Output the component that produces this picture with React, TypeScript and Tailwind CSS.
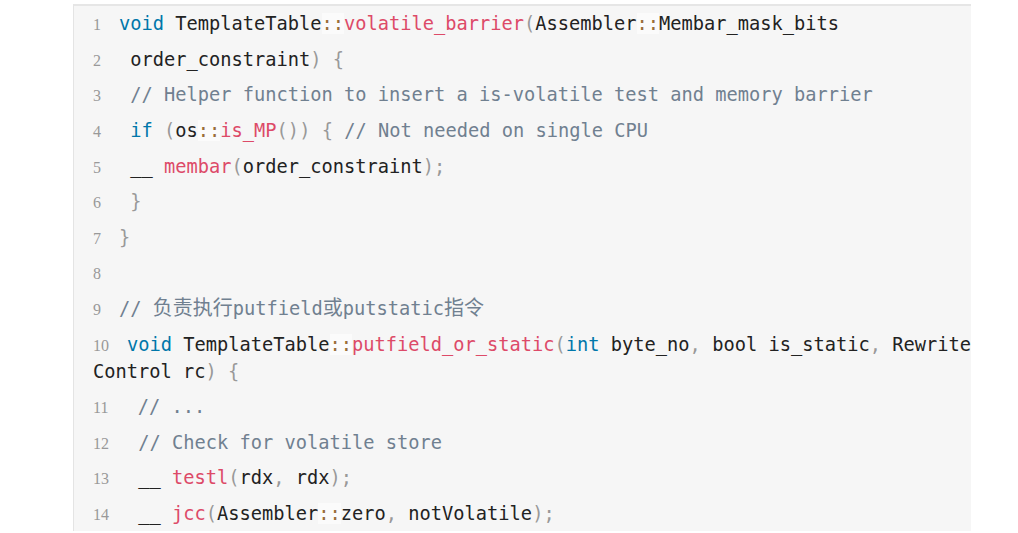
import React from 'react';

type Tok = [string, string];

const tone: Record<string, string> = {
  kw: 'text-[#0077aa]',
  fn: 'text-[#dd4a68]',
  p: 'text-[#999999]',
  op: 'text-[#9a6e3a] bg-white/60',
  cm: 'text-[#708090]',
  t: 'text-[#222222]',
};

// code lines, tokenised roughly the way prism does it
const lines: Tok[][] = [
  [['kw', 'void'], ['t', ' TemplateTable'], ['op', '::'], ['fn', 'volatile_barrier'], ['p', '('], ['t', 'Assembler'], ['op', '::'], ['t', 'Membar_mask_bits']],
  [['t', ' order_constraint'], ['p', ')'], ['t', ' '], ['p', '{']],
  [['cm', ' // Helper function to insert a is-volatile test and memory barrier']],
  [['t', ' '], ['kw', 'if'], ['t', ' '], ['p', '('], ['t', 'os'], ['op', '::'], ['fn', 'is_MP'], ['p', '()'], ['p', ')'], ['t', ' '], ['p', '{'], ['cm', ' // Not needed on single CPU']],
  [['t', ' __ '], ['fn', 'membar'], ['p', '('], ['t', 'order_constraint'], ['p', ')'], ['p', ';']],
  [['t', ' '], ['p', '}']],
  [['p', '}']],
  [],
  [['cm', '// '], ['cjk', '负责执行'], ['cm', 'putfield'], ['cjk', '或'], ['cm', 'putstatic'], ['cjk', '指令']],
  [['kw', 'void'], ['t', ' TemplateTable'], ['op', '::'], ['fn', 'putfield_or_static'], ['p', '('], ['kw', 'int'], ['t', ' byte_no'], ['p', ','], ['t', ' bool is_static'], ['p', ','], ['t', ' Rewrite\nControl rc'], ['p', ')'], ['t', ' '], ['p', '{']],
  [['cm', ' // ...']],
  [['cm', ' // Check for volatile store']],
  [['t', ' __ '], ['fn', 'testl'], ['p', '('], ['t', 'rdx'], ['p', ','], ['t', ' rdx'], ['p', ')'], ['p', ';']],
  [['t', ' __ '], ['fn', 'jcc'], ['p', '('], ['t', 'Assembler'], ['op', '::'], ['t', 'zero'], ['p', ','], ['t', ' notVolatile'], ['p', ')'], ['p', ';']],
];

const CodeLine = ({ n, toks }: { n: number; toks: Tok[] }) => (
  <div className="py-[4.3px] leading-[27px] whitespace-pre">
    <span className="font-['Liberation_Serif',serif] text-[16px] leading-none text-[#999999] mr-[18px]">{n}</span>
    {toks.map(([k, s], i) =>
      k === 'cjk' ? (
        <span key={i} className="text-[#708090] text-[20px] leading-none">{s}</span>
      ) : (
        <span key={i} className={tone[k]}>{s}</span>
      )
    )}
  </div>
);

export default function App() {
  return (
    <div className="h-[533px] overflow-hidden bg-white pt-[4px] pl-[73px]">
      <div className="w-[898px] overflow-hidden bg-[#f6f6f6] border-t-2 border-t-[#e6e6e6] border-l border-l-[#e4e4e4] pl-[19px] font-['DejaVu_Sans_Mono','Noto_Sans_CJK_SC',monospace] text-[18.7px]">
        {lines.map((toks, i) => (
          <CodeLine key={i} n={i + 1} toks={toks} />
        ))}
      </div>
    </div>
  );
}
